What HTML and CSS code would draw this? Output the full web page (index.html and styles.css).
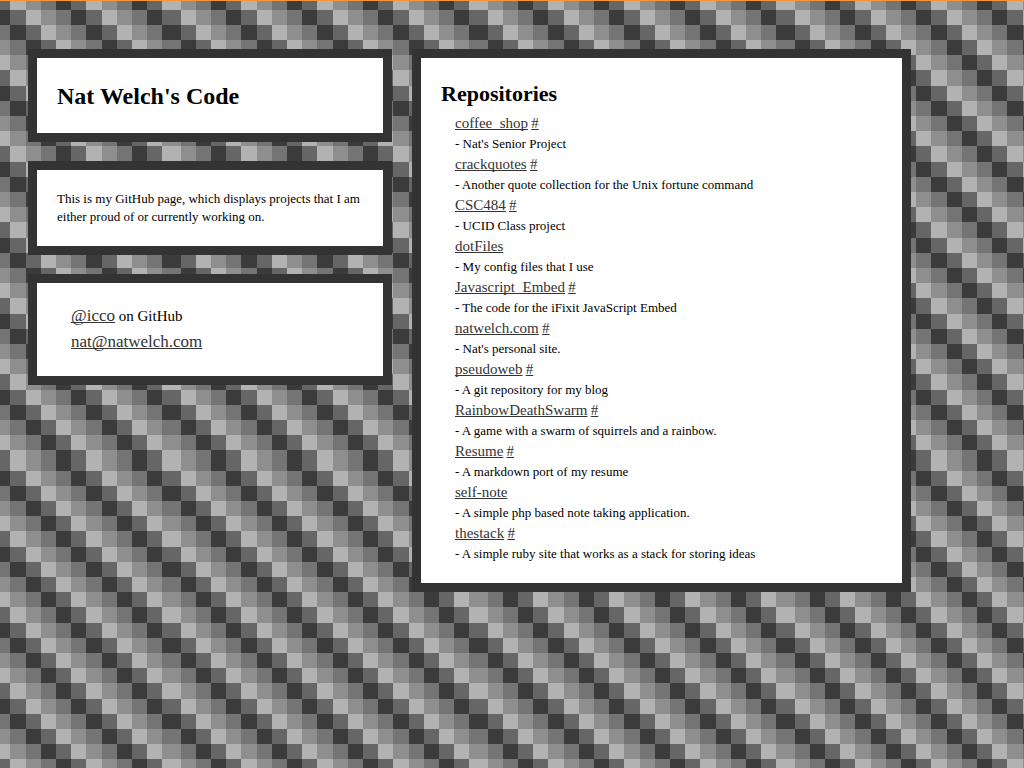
FILE: index.html
```html
<!DOCTYPE html>
<html lang="en">
<head>
<meta charset="utf-8">
<title>Nat Welch's Code</title>
<link rel="stylesheet" href="styles.css">
</head>
<body>
<div class="page">
  <div class="side">
    <header class="box box-title">
      <h1 class="title">Nat Welch's Code</h1>
    </header>
    <section class="box box-about">
      <p class="about">This is my GitHub page, which displays projects that I am either proud of or currently working on.</p>
    </section>
    <section class="box box-contact">
      <ul class="contact">
        <li><a href="#github">@icco</a> on GitHub</li>
        <li><a href="#mail">nat@natwelch.com</a></li>
      </ul>
    </section>
  </div>
  <main class="box box-repos">
    <h2 class="heading">Repositories</h2>
    <dl class="repos">
      <dt><a href="#coffee_shop">coffee_shop</a> <a href="#coffee_shop-home">#</a></dt>
      <dd>- Nat's Senior Project</dd>
      <dt><a href="#crackquotes">crackquotes</a> <a href="#crackquotes-home">#</a></dt>
      <dd>- Another quote collection for the Unix fortune command</dd>
      <dt><a href="#csc484">CSC484</a> <a href="#csc484-home">#</a></dt>
      <dd>- UCID Class project</dd>
      <dt><a href="#dotfiles">dotFiles</a></dt>
      <dd>- My config files that I use</dd>
      <dt><a href="#javascript_embed">Javascript_Embed</a> <a href="#javascript_embed-home">#</a></dt>
      <dd>- The code for the iFixit JavaScript Embed</dd>
      <dt><a href="#natwelch">natwelch.com</a> <a href="#natwelch-home">#</a></dt>
      <dd>- Nat's personal site.</dd>
      <dt><a href="#pseudoweb">pseudoweb</a> <a href="#pseudoweb-home">#</a></dt>
      <dd>- A git repository for my blog</dd>
      <dt><a href="#rainbow">RainbowDeathSwarm</a> <a href="#rainbow-home">#</a></dt>
      <dd>- A game with a swarm of squirrels and a rainbow.</dd>
      <dt><a href="#resume">Resume</a> <a href="#resume-home">#</a></dt>
      <dd>- A markdown port of my resume</dd>
      <dt><a href="#self-note">self-note</a></dt>
      <dd>- A simple php based note taking application.</dd>
      <dt><a href="#thestack">thestack</a> <a href="#thestack-home">#</a></dt>
      <dd>- A simple ruby site that works as a stack for storing ideas</dd>
    </dl>
  </main>
</div>
</body>
</html>
```

FILE: styles.css
```css
* {
  box-sizing: border-box;
}

html {
  min-height: 100%;
  border-top: 1px solid #f79433;
  /* Diagonal mosaic: a 5x5 cell pattern whose last column and row are wider */
  background: #747474 url("data:image/svg+xml,%3Csvg xmlns='http://www.w3.org/2000/svg' xmlns:xlink='http://www.w3.org/1999/xlink' width='307' height='461' shape-rendering='crispEdges'%3E%3Cdefs%3E%3Cpattern id='c' width='76' height='76' patternUnits='userSpaceOnUse'%3E%3Crect width='76' height='76' fill='%23747474'/%3E%3Cpath fill='%23b2b2b2' d='M0 0h15v15H0zM15 15h15v15H15zM30 30h15v15H30zM45 45h15v15H45zM60 60h16v16H60z'/%3E%3Cpath fill='%238e8e8e' d='M15 0h15v15H15zM30 15h15v15H30zM45 30h15v15H45zM60 45h16v15H60zM0 60h15v16H0z'/%3E%3Cpath fill='%233b3b3b' d='M45 0h15v15H45zM60 15h16v15H60zM0 30h15v15H0zM15 45h15v15H15zM30 60h15v16H30z'/%3E%3Cpath fill='%23666666' d='M60 0h16v15H60zM0 15h15v15H0zM15 30h15v15H15zM30 45h15v15H30zM45 60h15v16H45z'/%3E%3C/pattern%3E%3Cpattern id='r' xlink:href='%23c' patternTransform='translate(3 0)'/%3E%3Cpattern id='b' xlink:href='%23c' patternTransform='translate(0 5)'/%3E%3Cpattern id='k' xlink:href='%23c' patternTransform='translate(3 5)'/%3E%3C/defs%3E%3Crect width='304' height='456' fill='url(%23c)'/%3E%3Crect x='304' width='3' height='456' fill='url(%23r)'/%3E%3Crect y='456' width='304' height='5' fill='url(%23b)'/%3E%3Crect x='304' y='456' width='3' height='5' fill='url(%23k)'/%3E%3C/svg%3E") 181px 9px;
}

body {
  margin: 0;
  color: #000;
  font: 13px/18px "Liberation Serif", "Times New Roman", serif;
}

h1, h2, p, ul, dl, dd {
  margin: 0;
  padding: 0;
}

a {
  color: #333;
  text-decoration: underline;
  text-decoration-skip-ink: none;
}

.page {
  display: grid;
  grid-template-columns: 364fr 499fr;
  align-items: start;
  gap: 20px;
  max-width: 883px;
  margin: 48px 28px;
}

.side {
  display: grid;
  gap: 19px;
}

.box {
  padding: 20px;
  border: 9px solid #333;
  background: #fff;
}

.box-title {
  padding: 25px 20px 23px;
}

.title {
  font-size: 24px;
  line-height: 27px;
}

.box-contact {
  padding: 20px 34px 21px;
}

.contact {
  list-style: none;
  font-size: 15px;
  line-height: 26px;
}

.contact a {
  font-size: 17px;
}

.heading {
  font-size: 22px;
  line-height: 30px;
}

.box-repos {
  padding: 21px 20px 19px;
}

.repos {
  padding: 4px 14px 0;
}

.repos dt,
.repos dd {
  line-height: 20px;
}

.repos dt a {
  font-size: 15px;
}
```
